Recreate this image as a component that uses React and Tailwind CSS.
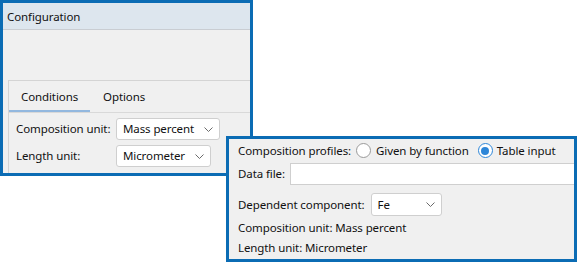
import React from 'react';

const font = { fontFamily: '"Noto Sans", "Segoe UI", sans-serif' };

function Chevron() {
  return (
    <svg width="9" height="5" viewBox="0 0 9 5" className="shrink-0">
      <path d="M0.5 0.5 L4.5 4.5 L8.5 0.5" fill="none" stroke="#6b6b6b" strokeWidth="1" />
    </svg>
  );
}

function Dropdown({ value, className }) {
  return (
    <div className={`flex items-center justify-between bg-white border border-[#cfcfcf] rounded-[3px] pl-[6px] pr-[6px] ${className}`}>
      <span>{value}</span>
      <Chevron />
    </div>
  );
}

function Radio({ checked }) {
  return (
    <div
      className={`w-[15px] h-[15px] rounded-full bg-white flex items-center justify-center shrink-0 border ${
        checked ? 'border-[#2d86d8]' : 'border-[#9a9a9a]'
      }`}
    >
      {checked && <div className="w-[8px] h-[8px] rounded-full bg-[#2d86d8]" />}
    </div>
  );
}

export default function App() {
  return (
    <div className="relative w-[577px] h-[262px] bg-white overflow-hidden text-[11.5px] tracking-[-0.1px] whitespace-nowrap text-[#111]" style={font}>
      {/* Configuration window */}
      <div className="absolute left-0 top-0 w-[253px] h-[176px] border-[3px] border-[#0b6cb4] bg-[#f0f0f0] flex flex-col overflow-hidden">
        <div className="h-[27px] shrink-0 bg-[#dde6ee] border-b border-[#c9cdd2] flex items-center pl-[4px] pt-[2px]">
          Configuration
        </div>
        <div className="flex-1 pt-[50px] pl-[5px]">
          <div className="border-t border-l border-[#d4d4d4] h-full">
            <div className="flex border-b border-[#d9d9d9] h-[32px]">
              <div className="h-full flex items-center pl-[12px] pr-[12px] pt-[2px] border-b-2 border-[#93b8df] box-border">
                Conditions
              </div>
              <div className="h-full flex items-center pl-[13px] pt-[1px]">Options</div>
            </div>
            <div className="grid grid-cols-[100px_auto] gap-y-[5px] pt-[5px] pl-[7px] items-center">
              <span>Composition unit:</span>
              <Dropdown value="Mass percent" className="w-[104px] h-[22px]" />
              <span>Length unit:</span>
              <Dropdown value="Micrometer" className="w-[95px] h-[22px]" />
            </div>
          </div>
        </div>
      </div>

      {/* Profiles window */}
      <div className="absolute left-[226px] top-[136px] w-[351px] h-[126px] border-[3px] border-[#0b6cb4] bg-[#f0f0f0] flex flex-col pl-[9px] overflow-hidden">
        <div className="h-[23px] flex items-center shrink-0">
          <span>Composition profiles:</span>
          <div className="ml-[5px]"><Radio /></div>
          <span className="ml-[5px]">Given by function</span>
          <div className="ml-[9px]"><Radio checked /></div>
          <span className="ml-[4px]">Table input</span>
        </div>
        <div className="h-[22px] flex items-center shrink-0 mt-[1px]">
          <span>Data file:</span>
          <div className="ml-[5px] flex-1 h-full bg-white border border-r-0 border-[#cfcfcf]" />
        </div>
        <div className="h-[23px] flex items-center shrink-0 mt-[8px]">
          <span>Dependent component:</span>
          <Dropdown value="Fe" className="ml-[6px] w-[71px] h-[23px]" />
        </div>
        <div className="h-[20px] flex items-center shrink-0 mt-[2px]">Composition unit: Mass percent</div>
        <div className="h-[20px] flex items-center shrink-0">Length unit: Micrometer</div>
      </div>
    </div>
  );
}
